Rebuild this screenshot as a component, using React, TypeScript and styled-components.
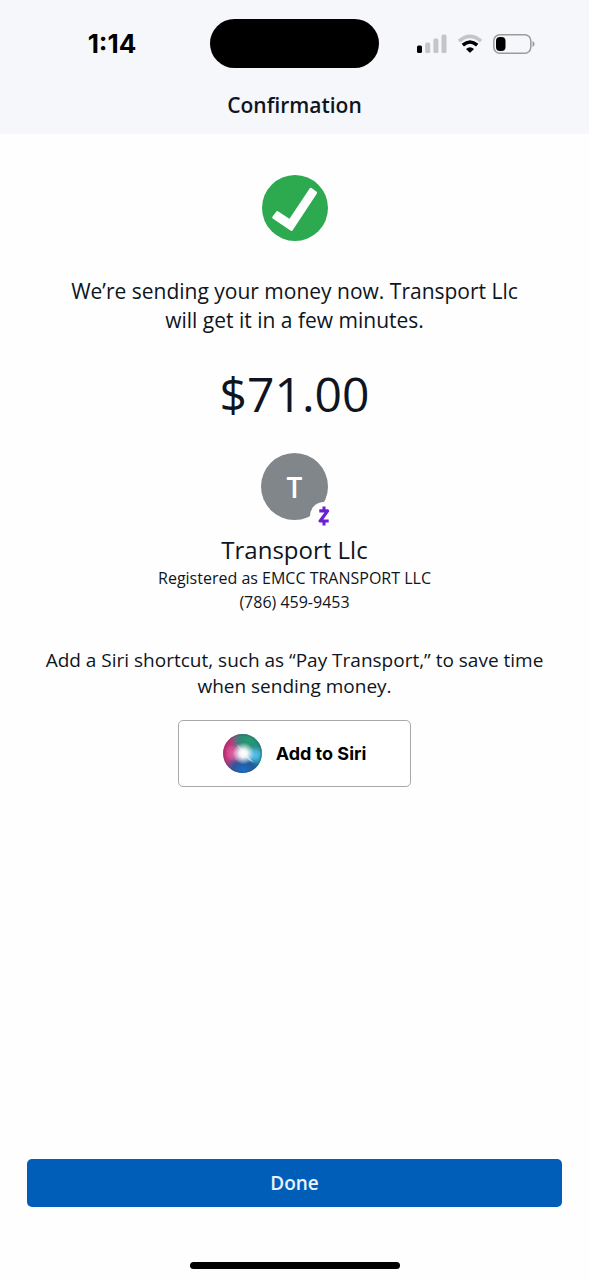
import React from "react";
import styled, { createGlobalStyle } from "styled-components";

const GlobalStyle = createGlobalStyle`
  *, *::before, *::after { box-sizing: border-box; }
  body {
    margin: 0;
    background: #fefefe;
    color: #0e1521;
    font-family: "Open Sans", "Noto Sans", sans-serif;
  }
`;

const Screen = styled.div`
  display: flex;
  flex-direction: column;
  min-height: 100vh;
`;

const Header = styled.header`
  background: #f5f7fb;
  padding-bottom: 14px;
`;

const StatusBar = styled.div`
  display: grid;
  grid-template-columns: 1fr auto 1fr;
  align-items: center;
  padding: 19px 0 8px;
`;

const Time = styled.span`
  justify-self: center;
  padding-left: 14px;
  color: #000;
  font: 700 26px/30px Inter, "Liberation Sans", sans-serif;
`;

const Island = styled.div`
  width: 169px;
  height: 49px;
  border-radius: 25px;
  background: #000;
`;

const StatusIcons = styled.div`
  display: flex;
  align-items: center;
  justify-content: center;
  gap: 10px;
  padding-right: 16px;
`;

const Title = styled.h1`
  margin: 0;
  padding-top: 14px;
  text-align: center;
  font-size: 21px;
  font-weight: 600;
  line-height: 30px;
`;

const Content = styled.main`
  flex: 1;
  display: flex;
  flex-direction: column;
  align-items: center;
  padding: 41px 24px 24px;
  text-align: center;
`;

const Message = styled.p`
  max-width: 480px;
  margin: 36px 0 27px;
  font-size: 21px;
  line-height: 29px;
`;

const Amount = styled.p`
  margin: 0 0 27px;
  font-size: 48px;
  line-height: 64px;
`;

const Avatar = styled.div`
  position: relative;
  display: grid;
  place-items: center;
  width: 67px;
  height: 67px;
  border-radius: 50%;
  background: #808689;
  color: #fff;
  font-size: 28px;
  font-weight: 600;
  line-height: 36px;
`;

const Badge = styled.span`
  position: absolute;
  right: -10px;
  bottom: -10px;
  display: grid;
  place-items: center;
  width: 28px;
  height: 28px;
  border-radius: 50%;
  background: #fefefe;
`;

const Name = styled.h2`
  margin: 14px 0 0;
  font-size: 24px;
  font-weight: 400;
  line-height: 32px;
`;

const Detail = styled.p`
  margin: 0;
  font-size: 16px;
  line-height: 24px;
`;

const SiriHint = styled.p`
  max-width: 510px;
  margin: 33px 0 21px;
  font-size: 19px;
  line-height: 26px;
`;

const SiriButton = styled.button`
  display: flex;
  align-items: center;
  justify-content: center;
  gap: 14px;
  padding: 13px 44px;
  border: 1px solid #a9a9ab;
  border-radius: 5px;
  background: #fff;
  color: #000;
  font: 700 18px/24px Inter, "Liberation Sans", sans-serif;
`;

const Footer = styled.footer`
  display: flex;
  flex-direction: column;
  align-items: center;
  gap: 55px;
  padding: 0 27px 11px;
`;

const DoneButton = styled.button`
  width: 100%;
  height: 48px;
  border: 0;
  border-radius: 5px;
  background: #005eb9;
  color: #e9f3ff;
  font: 600 19px/26px "Open Sans", "Noto Sans", sans-serif;
`;

const HomeIndicator = styled.div`
  width: 210px;
  height: 7px;
  border-radius: 4px;
  background: #000;
`;

const SignalIcon = () => (
  <svg width="30" height="20" viewBox="0 0 30 20" aria-hidden="true">
    <rect x="0" y="11.5" width="5" height="7.5" rx="1.5" fill="#000" />
    <g fill="#c5c5c8">
      <rect x="8.2" y="8.5" width="5" height="10.5" rx="1.5" />
      <rect x="16.4" y="4.5" width="5" height="14.5" rx="1.5" />
      <rect x="24.5" y="0.5" width="5" height="18.5" rx="1.5" />
    </g>
  </svg>
);

const WifiIcon = () => (
  <svg width="26" height="20" viewBox="0 0 26 20" fill="none" aria-hidden="true">
    <path d="M2 7.2Q13-2.6 24 7.2" stroke="#c5c5c8" strokeWidth="3.6" />
    <path d="M5.8 11.1Q13 4.9 20.2 11.1" stroke="#000" strokeWidth="3.6" />
    <path d="M9 14.9Q13 11.7 17 14.9L13.7 18.3Q13 19 12.3 18.3Z" fill="#000" />
  </svg>
);

const BatteryIcon = () => (
  <svg width="42" height="20" viewBox="0 0 42 20" aria-hidden="true">
    <rect x="0.8" y="0.8" width="37" height="18.4" rx="6" fill="none" stroke="#9b9b9e" strokeWidth="1.5" />
    <rect x="3" y="3" width="9.5" height="14" rx="4" fill="#000" />
    <path d="M39.5 7Q41.6 8 41.6 10T39.5 13Z" fill="#9b9b9e" />
  </svg>
);

const CheckIcon = () => (
  <svg width="66" height="66" viewBox="0 0 66 66" role="img" aria-label="Success">
    <circle cx="33" cy="33" r="33" fill="#2da94f" />
    <path
      d="M15.3 37.2L11.4 42.5L29.5 54.8L53.9 17.8L48.8 14L27.8 45.4Z"
      fill="#fff"
      stroke="#fff"
      strokeWidth="2.4"
      strokeLinejoin="round"
    />
  </svg>
);

const ZelleIcon = () => (
  <svg width="12" height="20" viewBox="0 0 12 20" fill="none" stroke="#6d1ed4" aria-hidden="true">
    <path d="M1.3 4.9H9.6L2.2 15H10.7" strokeWidth="3.2" strokeLinejoin="round" />
    <path d="M6 0.5V4.5M6 15.5V19.5" strokeWidth="3" />
  </svg>
);

const SiriIcon = () => (
  <svg width="39" height="39" viewBox="0 0 39 39" aria-hidden="true">
    <defs>
      <linearGradient id="siriBase" x1="0" y1="0.35" x2="1" y2="0.55">
        <stop offset="0" stopColor="#d81e68" />
        <stop offset="0.3" stopColor="#a44a86" />
        <stop offset="0.6" stopColor="#357a98" />
        <stop offset="1" stopColor="#188b9b" />
      </linearGradient>
      <radialGradient id="siriGreen" cx="0.68" cy="0.16" r="0.48">
        <stop offset="0" stopColor="#249c72" />
        <stop offset="0.55" stopColor="#268e76" stopOpacity="0.85" />
        <stop offset="1" stopColor="#268e76" stopOpacity="0" />
      </radialGradient>
      <radialGradient id="siriBlue" cx="0.52" cy="0.96" r="0.5">
        <stop offset="0" stopColor="#176fd0" />
        <stop offset="0.55" stopColor="#22549b" stopOpacity="0.85" />
        <stop offset="1" stopColor="#22549b" stopOpacity="0" />
      </radialGradient>
      <radialGradient id="siriPink" cx="0.27" cy="0.5" r="0.28">
        <stop offset="0" stopColor="#ee6aae" stopOpacity="0.8" />
        <stop offset="1" stopColor="#dd3b86" stopOpacity="0" />
      </radialGradient>
      <radialGradient id="siriCyan" cx="0.82" cy="0.54" r="0.25">
        <stop offset="0" stopColor="#55c5ee" />
        <stop offset="1" stopColor="#55c5ee" stopOpacity="0" />
      </radialGradient>
      <radialGradient id="siriGlow">
        <stop offset="0" stopColor="#fff" />
        <stop offset="0.35" stopColor="#fff" stopOpacity="0.92" />
        <stop offset="1" stopColor="#fff" stopOpacity="0" />
      </radialGradient>
    </defs>
    <circle cx="19.5" cy="19.5" r="19.5" fill="url(#siriBase)" />
    <circle cx="19.5" cy="19.5" r="19.5" fill="url(#siriGreen)" />
    <circle cx="19.5" cy="19.5" r="19.5" fill="url(#siriBlue)" />
    <circle cx="19.5" cy="19.5" r="19.5" fill="url(#siriPink)" />
    <circle cx="19.5" cy="19.5" r="19.5" fill="url(#siriCyan)" />
    <path d="M5 13Q13 9 21 19Q13 31 5 24Q2 18 5 13Z" fill="#ed78b5" opacity="0.2" />
    <path d="M21 19Q31 12 37 18Q37 26 30 26Q25 26 21 19Z" fill="#54bbed" opacity="0.35" />
    <path d="M20 19L31 28Q26 28 20 19Z" fill="#fff" opacity="0.5" />
    <path d="M20 19L13 10Q19 13 20 19Z" fill="#fff" opacity="0.35" />
    <circle cx="20.5" cy="19.5" r="11" fill="url(#siriGlow)" />
    <circle cx="19.5" cy="19.5" r="18.7" fill="none" stroke="#3c5367" strokeWidth="1.2" opacity="0.35" />
  </svg>
);

export default function App() {
  return (
    <Screen>
      <GlobalStyle />
      <Header>
        <StatusBar>
          <Time>1:14</Time>
          <Island />
          <StatusIcons>
            <SignalIcon />
            <WifiIcon />
            <BatteryIcon />
          </StatusIcons>
        </StatusBar>
        <Title>Confirmation</Title>
      </Header>
      <Content>
        <CheckIcon />
        <Message>We’re sending your money now. Transport Llc will get it in a few minutes.</Message>
        <Amount>$71.00</Amount>
        <Avatar>
          T
          <Badge>
            <ZelleIcon />
          </Badge>
        </Avatar>
        <Name>Transport Llc</Name>
        <Detail>Registered as EMCC TRANSPORT LLC</Detail>
        <Detail>(786) 459-9453</Detail>
        <SiriHint>Add a Siri shortcut, such as “Pay Transport,” to save time when sending money.</SiriHint>
        <SiriButton type="button">
          <SiriIcon />
          Add to Siri
        </SiriButton>
      </Content>
      <Footer>
        <DoneButton type="button">Done</DoneButton>
        <HomeIndicator />
      </Footer>
    </Screen>
  );
}
